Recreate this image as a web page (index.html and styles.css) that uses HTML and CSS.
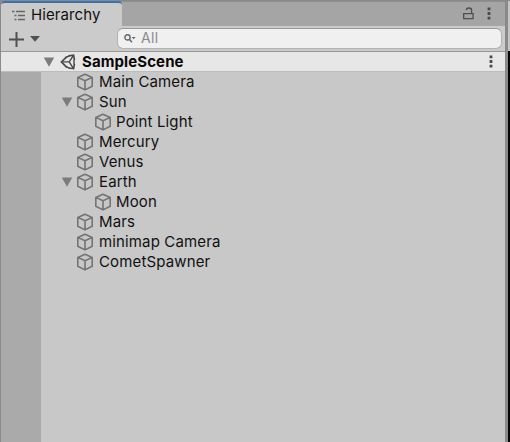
FILE: index.html
```html
<!DOCTYPE html>
<html lang="en">
<head>
<meta charset="utf-8">
<title>Hierarchy</title>
<link rel="stylesheet" href="styles.css">
</head>
<body>
<svg class="defs" width="0" height="0">
  <symbol id="cube" viewBox="0 0 18 18"><path d="M9 1.2 16.2 4.4V13.2L9 16.9 1.8 13.2V4.4ZM1.8 4.4 9 7.8 16.2 4.4M9 7.8V16.9" fill="none" stroke="#747474" stroke-width="1.6" stroke-linejoin="round"/></symbol>
  <symbol id="fold" viewBox="0 0 12 10"><path d="M.8.5H11.2L6 9.7Z" fill="#7c7c7c"/></symbol>
  <symbol id="dots" viewBox="0 0 4 13"><path d="M.6.4h2.8v2.8H.6ZM.6 5.1h2.8v2.8H.6ZM.6 9.8h2.8v2.8H.6Z" fill="#4b4b4b"/></symbol>
</svg>
<div class="window">
  <section class="panel">
    <header class="tabs">
      <div class="tab">
        <svg class="list-icon" width="14" height="11" viewBox="0 0 14 11"><path d="M0 1.5H2.5M4 1.5H13M2.5 5.5H4.5M6 5.5H13M2.5 9.5H4.5M6 9.5H13" fill="none" stroke="#666" stroke-width="1.3"/></svg>
        <span>Hierarchy</span>
      </div>
      <svg class="lock" width="11" height="13" viewBox="0 0 11 13"><path d="M.7 6.7H10.1V11.7H.7ZM8.6 6.7V3.2Q8.6 1 6 1Q3.6 1 3.1 3" fill="none" stroke="#505050" stroke-width="1.3"/></svg>
      <svg class="tab-menu" width="4" height="13"><use href="#dots"/></svg>
    </header>
    <div class="toolbar">
      <svg class="plus" width="15" height="15" viewBox="0 0 15 15"><path d="M7.5 0V15M0 7.5H15" stroke="#505050" stroke-width="2"/></svg>
      <svg class="caret" width="10" height="6" viewBox="0 0 10 6"><path d="M0 0H10L5 5.8Z" fill="#505050"/></svg>
      <div class="search">
        <svg width="12" height="9" viewBox="0 0 12 9"><circle cx="3.5" cy="3.4" r="2.6" fill="none" stroke="#666" stroke-width="1.4"/><path d="M5.3 5.2 8 8.2" stroke="#666" stroke-width="1.5"/><path d="M7.6 3H11.6L9.6 5.3Z" fill="#666"/></svg>
        <span>All</span>
      </div>
    </div>
    <div class="scene">
      <svg class="fold" width="12" height="10"><use href="#fold"/></svg>
      <svg class="unity" width="16" height="16" viewBox="0 0 16 16"><path d="M6.8 2.6 1.4 7.9 6.8 13.4M8.6 1.9 13.6 1.2 14.5 6M14.5 10 13.6 14.7 8.6 14" fill="none" stroke="#484848" stroke-width="1.6"/><path d="M2 7.9H9.2L13.2 1.8M9.2 7.9 13.2 14.2M14 5.5V10.5M9.2 1.8 5.7 3.7M9.2 14.1 5.7 12.3" fill="none" stroke="#484848" stroke-width="1.4"/></svg>
      <span class="scene-name">SampleScene</span>
      <svg class="scene-menu" width="4" height="13"><use href="#dots"/></svg>
    </div>
    <div class="body">
      <ul class="tree">
        <li><svg class="cube"><use href="#cube"/></svg><span>Main Camera</span></li>
        <li class="parent"><svg class="fold" width="12" height="10"><use href="#fold"/></svg><svg class="cube"><use href="#cube"/></svg><span>Sun</span></li>
        <li class="child"><svg class="cube"><use href="#cube"/></svg><span>Point Light</span></li>
        <li><svg class="cube"><use href="#cube"/></svg><span>Mercury</span></li>
        <li><svg class="cube"><use href="#cube"/></svg><span>Venus</span></li>
        <li class="parent"><svg class="fold" width="12" height="10"><use href="#fold"/></svg><svg class="cube"><use href="#cube"/></svg><span>Earth</span></li>
        <li class="child"><svg class="cube"><use href="#cube"/></svg><span>Moon</span></li>
        <li><svg class="cube"><use href="#cube"/></svg><span>Mars</span></li>
        <li><svg class="cube"><use href="#cube"/></svg><span>minimap Camera</span></li>
        <li><svg class="cube"><use href="#cube"/></svg><span>CometSpawner</span></li>
      </ul>
    </div>
  </section>
  <aside class="neighbor"></aside>
</div>
</body>
</html>
```
FILE: styles.css
```css
* { box-sizing: border-box; }
body { margin: 0; overflow: hidden; font: 15px/20px Inter, "Liberation Sans", sans-serif; color: #111; }
svg { display: block; flex: none; }
.defs { position: absolute; }
.window { display: flex; width: 510px; height: 442px; padding: 1px 0 0 1px; background: #8a8a8a; }
.panel { display: flex; flex-direction: column; width: 504px; background: #c8c8c8; }
.tabs { display: flex; align-items: flex-start; height: 25px; background: #a5a5a5; border-top: 1px solid #8e8e8e; }
.tab { display: flex; align-items: center; width: 121px; height: 25px; margin-top: -1px; padding: 1px 0 0 11px; border-top: 2px solid #3a72b0; border-radius: 4px 4px 0 0; background: #cbcbcb; letter-spacing: .1px; }
.list-icon { margin-right: 5px; }
.lock { margin: 5px 0 0 341px; }
.tab-menu { margin: 5px 0 0 13px; }
.toolbar { display: flex; align-items: center; height: 25px; padding: 0 3px 1px 8px; background: #cbcbcb; }
.plus { margin-top: 2px; }
.caret { margin: 1px 0 0 6px; }
.search { display: flex; align-items: center; flex: 1; height: 21px; margin-left: 77px; padding-left: 6px; border: 1px solid #b2b2b2; border-top-color: #999; border-radius: 6px; background: #f0f0f0; color: #8a8a8a; font-size: 14px; }
.search span { margin-left: 5px; letter-spacing: .3px; }
.scene { display: flex; align-items: center; height: 21px; padding: 0 12px 0 42px; border: solid #989898; border-width: 1px 0; border-bottom-color: #bcbcbc; background: #e7e7e7; }
.unity { margin-left: 5px; }
.scene-name { margin-left: 6px; font-weight: 700; letter-spacing: .1px; color: #080808; }
.scene-menu { margin-left: auto; }
.body { display: flex; flex: 1; border-left: 40px solid #aaa; }
.tree { flex: 1; margin: 0; padding: 0; list-style: none; }
.tree li { display: flex; align-items: center; height: 20px; padding-left: 35px; letter-spacing: .14px; }
.tree .parent { padding-left: 20px; }
.tree .child { padding-left: 53px; }
.cube { width: 18px; height: 18px; }
.parent .cube { margin-left: 3px; }
.tree span { margin-left: 5px; }
.child span { margin-left: 4px; }
.neighbor { width: 2px; margin-left: 3px; border-top: 50px solid #c5c5c5; background: #050505; }
```
